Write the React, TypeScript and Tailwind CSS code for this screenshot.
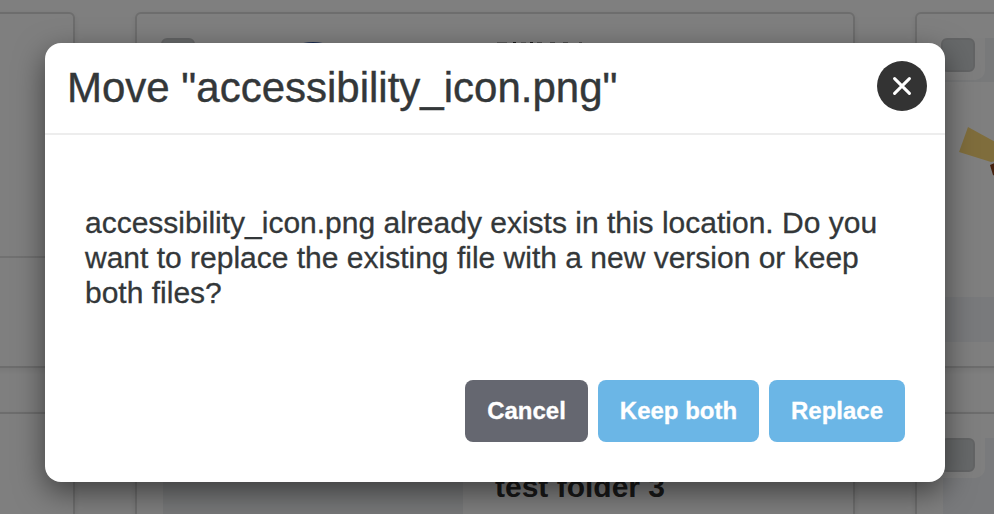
import React from "react";

function Checkbox({ className = "" }: { className?: string }) {
  return (
    <div
      className={`size-[34px] rounded-md border-2 border-[#c7c9cb] bg-[#cfd2d4] ${className}`}
    />
  );
}

function Card({ children }: { children?: React.ReactNode }) {
  return (
    <section className="relative h-[356px] w-[720px] shrink-0 overflow-hidden rounded-md border-2 border-[#dadada] bg-white shadow-[0_2px_6px_rgba(0,0,0,0.08)]">
      {children}
    </section>
  );
}

function Library() {
  return (
    <main className="-ml-[645px] flex w-max flex-col gap-11 pt-3">
      <div className="flex gap-[60px]">
        <Card>
          <div className="mt-[242px] h-0.5 bg-[#e2e2e2]" />
        </Card>
        <Card>
          <div className="flex pt-6 pl-6">
            <Checkbox />
            <div className="mt-[3.5px] ml-[68px] h-[100px] w-[100px] rounded-[50%] bg-[#3456a0]" />
            <div className="mt-[4px] ml-[134px] flex h-px items-start">
              <div className="h-px w-[10px] bg-[#b0b0b0]" />
              <div className="ml-[6px] h-px w-[3px] bg-[#333]" />
              <div className="ml-[5px] h-px w-[5px] bg-[#b0b0b0]" />
              <div className="ml-[4px] h-px w-[3px] bg-[#333]" />
              <div className="ml-[4px] h-px w-[5px] bg-[#9c9c9c]" />
              <div className="ml-[8px] h-px w-[5px] bg-[#9c9c9c]" />
              <div className="ml-[8px] h-px w-[5px] bg-[#9c9c9c]" />
              <div className="ml-[11px] h-px w-[3px] bg-[#9c9c9c]" />
            </div>
          </div>
        </Card>
        <Card>
          <div className="ml-[26px] pt-6">
            <div className="h-[44px] w-[300px] bg-[#f0f3f5]">
              <div className="h-[42px] w-[42px] rounded-br-[10px] bg-[#fdfdfd]">
                <Checkbox className="-ml-0.5" />
              </div>
            </div>
            <svg className="mt-[45px] ml-[16px] block" width="80" height="60" viewBox="0 0 80 60">
              <path d="M0 25 L9 0 L38 16 L38 34 L32 35 Z" fill="#ffdb79" />
              <path d="M31 38 L38 35 V50 L34 48 Z" fill="#8b421d" />
            </svg>
            <div className="mt-[110px] h-[45px] w-[300px] bg-[#f2f5f8]" />
          </div>
        </Card>
      </div>
      <div className="flex gap-[60px]">
        <Card />
        <Card>
          <div className="flex pt-[26px] pl-[26px]">
            <div className="h-[300px] w-[300px] bg-[#eef0f2]" />
            <h2 className="mt-[31px] ml-8 text-[30px] leading-8 font-bold text-[#333]">
              test folder 3
            </h2>
          </div>
        </Card>
        <Card>
          <div className="mt-[26px] ml-[26px] h-[300px] w-[300px] bg-[#f2f5f8]">
            <div className="h-10 w-[42px] rounded-br-[10px] bg-white">
              <Checkbox className="-mt-0.5 -ml-0.5" />
            </div>
          </div>
        </Card>
      </div>
    </main>
  );
}

function MoveDialog() {
  return (
    <div className="absolute inset-0 bg-black/50 px-[45px] pt-[43px]">
      <div
        role="dialog"
        className="h-[439px] w-[900px] rounded-2xl bg-white text-[#333739] shadow-[0_10px_30px_rgba(0,0,0,0.5)]"
      >
        <header className="flex h-[92px] items-start justify-between border-b-2 border-[#ededed] pt-[18px] pr-[18px] pl-[22px]">
          <h1 className="pt-px text-[42px] leading-[52px] [-webkit-text-stroke:0.4px]">
            Move "accessibility_icon.png"
          </h1>
          <button
            aria-label="Close"
            className="flex size-[50px] items-center justify-center rounded-full bg-[#333]"
          >
            <svg className="-mt-px" width="18" height="18" viewBox="0 0 18 18">
              <path
                d="M1.6 1.6 L16.4 16.4 M16.4 1.6 L1.6 16.4"
                stroke="#fff"
                strokeWidth="3"
                strokeLinecap="round"
              />
            </svg>
          </button>
        </header>
        <p className="px-10 pt-[70px] text-[30px] leading-[35px] [-webkit-text-stroke:0.3px]">
          accessibility_icon.png already exists in this location. Do you want to replace the
          existing file with a new version or keep both files?
        </p>
        <footer className="flex justify-end gap-[10px] px-10 pt-[70px] text-[24px] leading-[62px] font-bold text-white [-webkit-text-stroke:0.3px]">
          <button className="h-[62px] w-[123px] rounded-lg bg-[#656770]">Cancel</button>
          <button className="h-[62px] w-[161px] rounded-lg bg-[#6bb6e6]">Keep both</button>
          <button className="h-[62px] w-[136px] rounded-lg bg-[#6bb6e6]">Replace</button>
        </footer>
      </div>
    </div>
  );
}

export default function App() {
  return (
    <div className="relative h-[514px] w-[994px] overflow-hidden bg-white font-['Liberation_Sans',Arial,sans-serif]">
      <Library />
      <MoveDialog />
    </div>
  );
}
